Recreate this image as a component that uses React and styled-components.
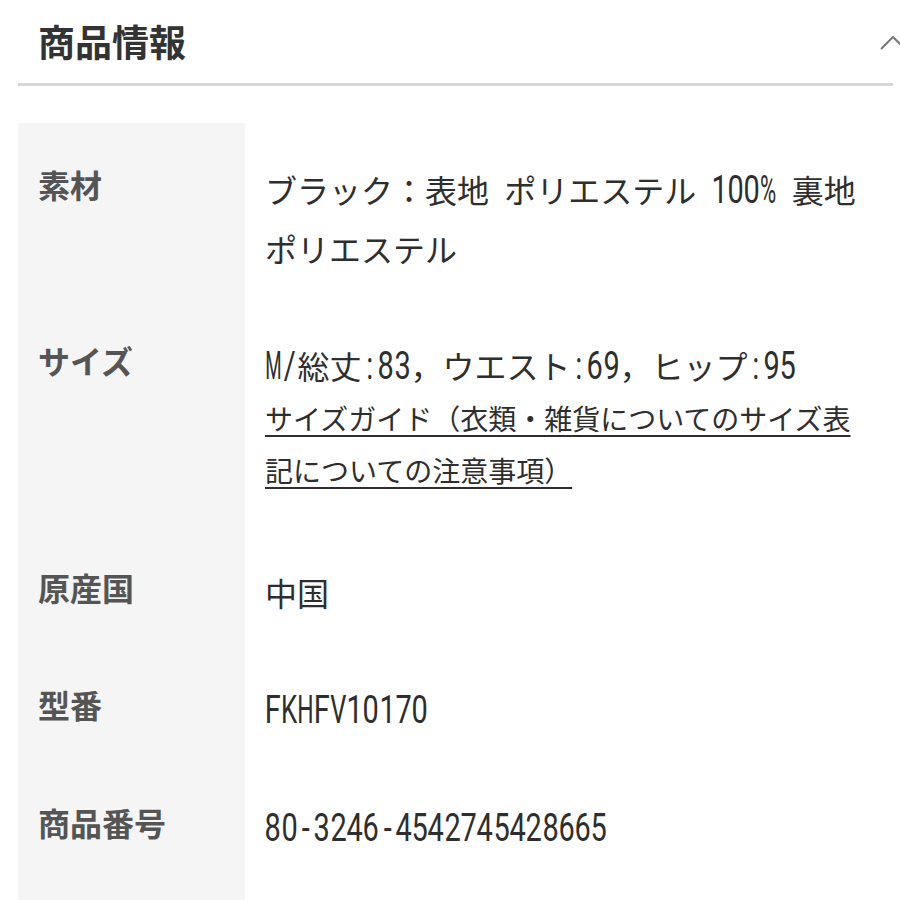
import React from "react";
import styled, { createGlobalStyle } from "styled-components";

const CELL = 16.3;
// roboto letters wider than a digit get their own design width
const WIDE = { M: 33, W: 34, H: 27, K: 24, V: 24.5, "%": 28 };

const GlobalStyle = createGlobalStyle`
  body {
    margin: 0;
    background: #fff;
    font-family: "Noto Sans CJK JP", "Noto Sans", sans-serif;
    overflow: hidden;
  }
`;

const Panel = styled.section`
  margin-left: 18px;
  width: 875px;
`;

const Header = styled.div`
  display: flex;
  align-items: center;
  justify-content: space-between;
  padding: 19px 0 20px 20px;
  border-bottom: 3px solid #d6d6d6;
`;

const Title = styled.h2`
  margin: 0;
  font-size: 37px;
  line-height: 44px;
  font-weight: 700;
  color: #333;
`;

const Chevron = styled.svg`
  width: 26px;
  height: 14px;
  margin-right: -13px;
  margin-top: 4px;
`;

const Table = styled.div`
  margin-top: 37px;
`;

const Row = styled.div`
  display: grid;
  grid-template-columns: 227px 1fr;

  &:last-child > * {
    padding-bottom: 46px;
  }
`;

const Label = styled.div`
  background: #f5f5f5;
  padding: 37px 0 22px 20px;
  font-size: 32px;
  line-height: 48px;
  font-weight: 700;
  color: #555;
`;

const Value = styled.div`
  padding: 37px 8px 22px 20px;
  font-size: 32px;
  line-height: 58px;
  color: #2e2e2e;
  word-spacing: 8px;
`;

const Word = styled.span`
  white-space: nowrap;
`;

// half-width latin is set in fixed, narrow cells like the app's mono font
const MonoRun = styled.span`
  font-family: Roboto, "Liberation Sans", sans-serif;
  font-size: 38px;
  word-spacing: 0;
  white-space: nowrap;
`;

const Cell = styled.span`
  display: inline-flex;
  justify-content: center;
  width: ${(p) => p.$w}px;
  margin: 0 ${(p) => -(p.$w - CELL) / 2}px;
  transform: scaleX(${(p) => CELL / p.$w});
`;

const Latin = ({ children }) => (
  <MonoRun>
    {[...children].map((ch, i) => (
      <Cell key={i} $w={WIDE[ch] || 21.4}>
        {ch}
      </Cell>
    ))}
  </MonoRun>
);

const Guide = styled.a`
  display: block;
  max-width: 600px;
  margin: -3px 0 8px;
  font-size: 28px;
  line-height: 52px;
  color: #2e2e2e;
  word-spacing: 0;
  text-decoration: underline;
  text-decoration-thickness: 2px;
  text-underline-offset: 5px;
`;

export default function App() {
  return (
    <>
      <GlobalStyle />
      <Panel>
        <Header>
          <Title>商品情報</Title>
          <Chevron viewBox="0 0 26 14">
            <polyline points="1,13 13,1 25,13" fill="none" stroke="#777" strokeWidth="2" />
          </Chevron>
        </Header>
        <Table>
          <Row>
            <Label>素材</Label>
            <Value>
              <Word>ブラック：表地</Word> <Word>ポリエステル</Word> <Latin>100%</Latin>{" "}
              <Word>裏地</Word> <Word>ポリエステル</Word>
            </Value>
          </Row>
          <Row>
            <Label>サイズ</Label>
            <Value>
              <Latin>M/</Latin>総丈<Latin>:83</Latin>，ウエスト<Latin>:69</Latin>，ヒップ<Latin>:95</Latin>
              <Guide href="#">サイズガイド（衣類・雑貨についてのサイズ表記についての注意事項）</Guide>
            </Value>
          </Row>
          <Row>
            <Label>原産国</Label>
            <Value>中国</Value>
          </Row>
          <Row>
            <Label>型番</Label>
            <Value>
              <Latin>FKHFV10170</Latin>
            </Value>
          </Row>
          <Row>
            <Label>商品番号</Label>
            <Value>
              <Latin>80-3246-4542745428665</Latin>
            </Value>
          </Row>
        </Table>
      </Panel>
    </>
  );
}
